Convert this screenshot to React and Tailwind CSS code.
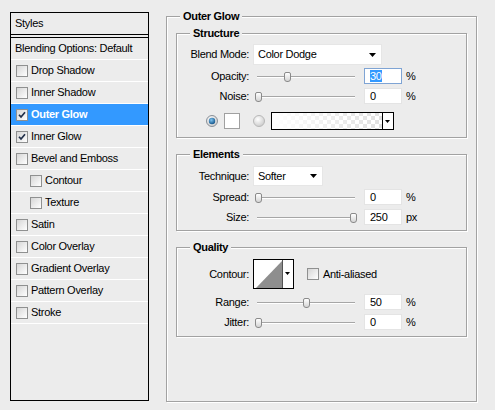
import React from "react";

const styleRows = [
  { label: "Drop Shadow" },
  { label: "Inner Shadow" },
  { label: "Outer Glow", checked: true, selected: true },
  { label: "Inner Glow", checked: true },
  { label: "Bevel and Emboss" },
  { label: "Contour", indent: true },
  { label: "Texture", indent: true },
  { label: "Satin" },
  { label: "Color Overlay" },
  { label: "Gradient Overlay" },
  { label: "Pattern Overlay" },
  { label: "Stroke" },
];

function Check({ checked }) {
  return (
    <span className="w-[12px] h-[12px] shrink-0 border border-[#8f9090] bg-gradient-to-br from-[#d6d6d6] to-white flex items-center justify-center">
      {checked && (
        <svg width="8" height="8" viewBox="0 0 8 8">
          <path d="M1 3.8 L3 6 L7 1.2" stroke="#22304a" strokeWidth="1.7" fill="none" />
        </svg>
      )}
    </span>
  );
}

function Radio({ checked }) {
  return (
    <svg width="12" height="12" viewBox="0 0 12 12" className="shrink-0">
      <defs>
        <radialGradient id={checked ? "rOn" : "rOff"} cx="0.4" cy="0.35" r="0.7">
          <stop offset="0" stopColor="#ffffff" />
          <stop offset="1" stopColor="#c9c9c9" />
        </radialGradient>
        <radialGradient id="dot" cx="0.4" cy="0.35" r="0.7">
          <stop offset="0" stopColor="#7fc4f0" />
          <stop offset="1" stopColor="#0d4f86" />
        </radialGradient>
      </defs>
      <circle cx="6" cy="6" r="5.5" fill={checked ? "url(#rOn)" : "url(#rOff)"} stroke={checked ? "#8a9098" : "#b8b8b8"} />
      {checked && <circle cx="6" cy="6" r="3.2" fill="url(#dot)" />}
    </svg>
  );
}

function Arrow() {
  return (
    <svg width="7" height="4" viewBox="0 0 7 4" className="shrink-0">
      <polygon points="0,0 7,0 3.5,4" fill="#000" />
    </svg>
  );
}

function GroupBox({ title, className, children }) {
  return (
    <div className={`relative border border-[#a2a2a2] shadow-[inset_1px_1px_0_#fff,1px_1px_0_#fff] ${className}`}>
      <span className="absolute left-[13px] top-[-7px] px-[3px] bg-[#ececec] font-bold leading-[13px]">
        {title}
      </span>
      {children}
    </div>
  );
}

function Label({ children }) {
  return <span className="w-[72px] shrink-0 text-right">{children}</span>;
}

function Slider({ value }) {
  return (
    <div className="relative w-[98px] h-[16px] ml-[8px] shrink-0">
      <div className="absolute left-0 right-0 top-[8px] h-[2px] border-t border-[#a6a6a6] border-b border-b-white" />
      <div
        className="absolute top-[4px] w-[7px] h-[10px] border border-[#8a8a8a] rounded-t-[2px] rounded-b-[3px] bg-gradient-to-b from-white to-[#d4d4d4]"
        style={{ left: Math.round(value * 95) - 2 }}
      />
    </div>
  );
}

function NumField({ value, unit, focused }) {
  return (
    <>
      <div
        className={`ml-[9px] w-[38px] h-[16px] shrink-0 bg-white border flex items-center pl-[5px] ${
          focused ? "border-[#7fa4d4]" : "border-[#e4e4e4]"
        }`}
      >
        {focused ? (
          <span className="bg-[#3399ff] text-white leading-[12px]">{value}</span>
        ) : (
          value
        )}
      </div>
      <span className="ml-[4px]">{unit}</span>
    </>
  );
}

function SliderRow({ label, value, field, unit = "%", focused, className }) {
  return (
    <div className={`flex items-center h-[16px] ${className}`}>
      <Label>{label}</Label>
      <Slider value={value} />
      <NumField value={field} unit={unit} focused={focused} />
    </div>
  );
}

function Select({ value, width, height }) {
  return (
    <div
      className={`ml-[4px] bg-white border border-[#e6e6e6] flex items-center justify-between pl-[4px] pr-[5px] ${width} ${height}`}
    >
      <span>{value}</span>
      <Arrow />
    </div>
  );
}

function GradientSwatch() {
  return (
    <svg width="123" height="18" viewBox="0 0 123 18" className="ml-[6px] shrink-0">
      <defs>
        <pattern id="checker" width="8" height="8" patternUnits="userSpaceOnUse">
          <rect width="8" height="8" fill="#fff" />
          <rect width="4" height="4" fill="#e0e0e0" />
          <rect x="4" y="4" width="4" height="4" fill="#e0e0e0" />
        </pattern>
        <linearGradient id="fade" x1="0" x2="1" y1="0" y2="0">
          <stop offset="0" stopColor="#fff" stopOpacity="1" />
          <stop offset="1" stopColor="#fff" stopOpacity="0" />
        </linearGradient>
      </defs>
      <rect x="1" y="1" width="110" height="16" fill="url(#checker)" />
      <rect x="1" y="1" width="110" height="16" fill="url(#fade)" />
      <rect x="111" y="1" width="11" height="16" fill="#fff" />
      <line x1="111.5" y1="1" x2="111.5" y2="17" stroke="#000" />
      <polygon points="114,8 119,8 116.5,11" fill="#000" />
      <rect x="0.5" y="0.5" width="122" height="17" fill="none" stroke="#000" />
    </svg>
  );
}

function ContourPreview() {
  return (
    <svg width="41" height="30" viewBox="0 0 41 30" className="ml-[4px] shrink-0">
      <rect x="0.5" y="0.5" width="40" height="29" fill="#fff" stroke="#000" />
      <polygon points="3,29 29,2 29,29" fill="#8e8e8e" />
      <line x1="29.5" y1="1" x2="29.5" y2="29" stroke="#555" />
      <polygon points="32,13 37,13 34.5,16" fill="#000" />
    </svg>
  );
}

function StylesList() {
  return (
    <div className="ml-[10px] mt-[12px] w-[139px] h-[389px] border border-black shrink-0">
      <div className="h-[22px] border-b border-black flex items-center pl-[4px]">Styles</div>
      <div className="h-[2px]" />
      <div className="h-[23px] border-t border-black border-b border-b-white flex items-center pl-[4px]">
        Blending Options: Default
      </div>
      {styleRows.map((row) => (
        <div
          key={row.label}
          className={`h-[22px] border-b border-white flex items-center gap-[3px] ${
            row.indent ? "pl-[19px]" : "pl-[5px]"
          } ${row.selected ? "bg-[#3399ff] text-white font-bold" : ""}`}
        >
          <Check checked={row.checked} />
          <span>{row.label}</span>
        </div>
      ))}
    </div>
  );
}

export default function App() {
  return (
    <div className="w-[495px] h-[410px] bg-[#ececec] flex items-start text-[11px] leading-[13px] text-black font-['Liberation_Sans',Arial,sans-serif] tracking-[-0.3px] overflow-hidden">
      <StylesList />

      <GroupBox title="Outer Glow" className="ml-[17px] mt-[16px] w-[311px] h-[386px] shrink-0">
        <div className="pt-[16px] pl-[9px] flex flex-col gap-[16px]">
          <GroupBox title="Structure" className="w-[291px] h-[105px]">
            <div className="flex items-center mt-[10px] h-[21px]">
              <Label>Blend Mode:</Label>
              <Select value="Color Dodge" width="w-[129px]" height="h-[21px]" />
            </div>
            <SliderRow label="Opacity:" value={0.3} field="30" focused className="mt-[3px]" />
            <SliderRow label="Noise:" value={0} field="0" className="mt-[4px]" />
            <div className="flex items-center mt-[8px] h-[18px] pl-[29px]">
              <Radio checked />
              <div className="ml-[6px] w-[16px] h-[16px] bg-white border border-[#a0a0a0] shrink-0" />
              <span className="ml-[13px] flex">
                <Radio />
              </span>
              <GradientSwatch />
            </div>
          </GroupBox>

          <GroupBox title="Elements" className="w-[291px] h-[77px]">
            <div className="flex items-center mt-[11px] h-[20px]">
              <Label>Technique:</Label>
              <Select value="Softer" width="w-[70px]" height="h-[20px]" />
            </div>
            <SliderRow label="Spread:" value={0} field="0" className="mt-[3px]" />
            <SliderRow label="Size:" value={1} field="250" unit="px" className="mt-[4px]" />
          </GroupBox>

          <GroupBox title="Quality" className="w-[291px] h-[90px]">
            <div className="flex items-center mt-[11px] h-[30px]">
              <Label>Contour:</Label>
              <ContourPreview />
              <span className="ml-[13px] flex">
                <Check />
              </span>
              <span className="ml-[4px]">Anti-aliased</span>
            </div>
            <SliderRow label="Range:" value={0.5} field="50" className="mt-[5px]" />
            <SliderRow label="Jitter:" value={0} field="0" className="mt-[4px]" />
          </GroupBox>
        </div>
      </GroupBox>
    </div>
  );
}
